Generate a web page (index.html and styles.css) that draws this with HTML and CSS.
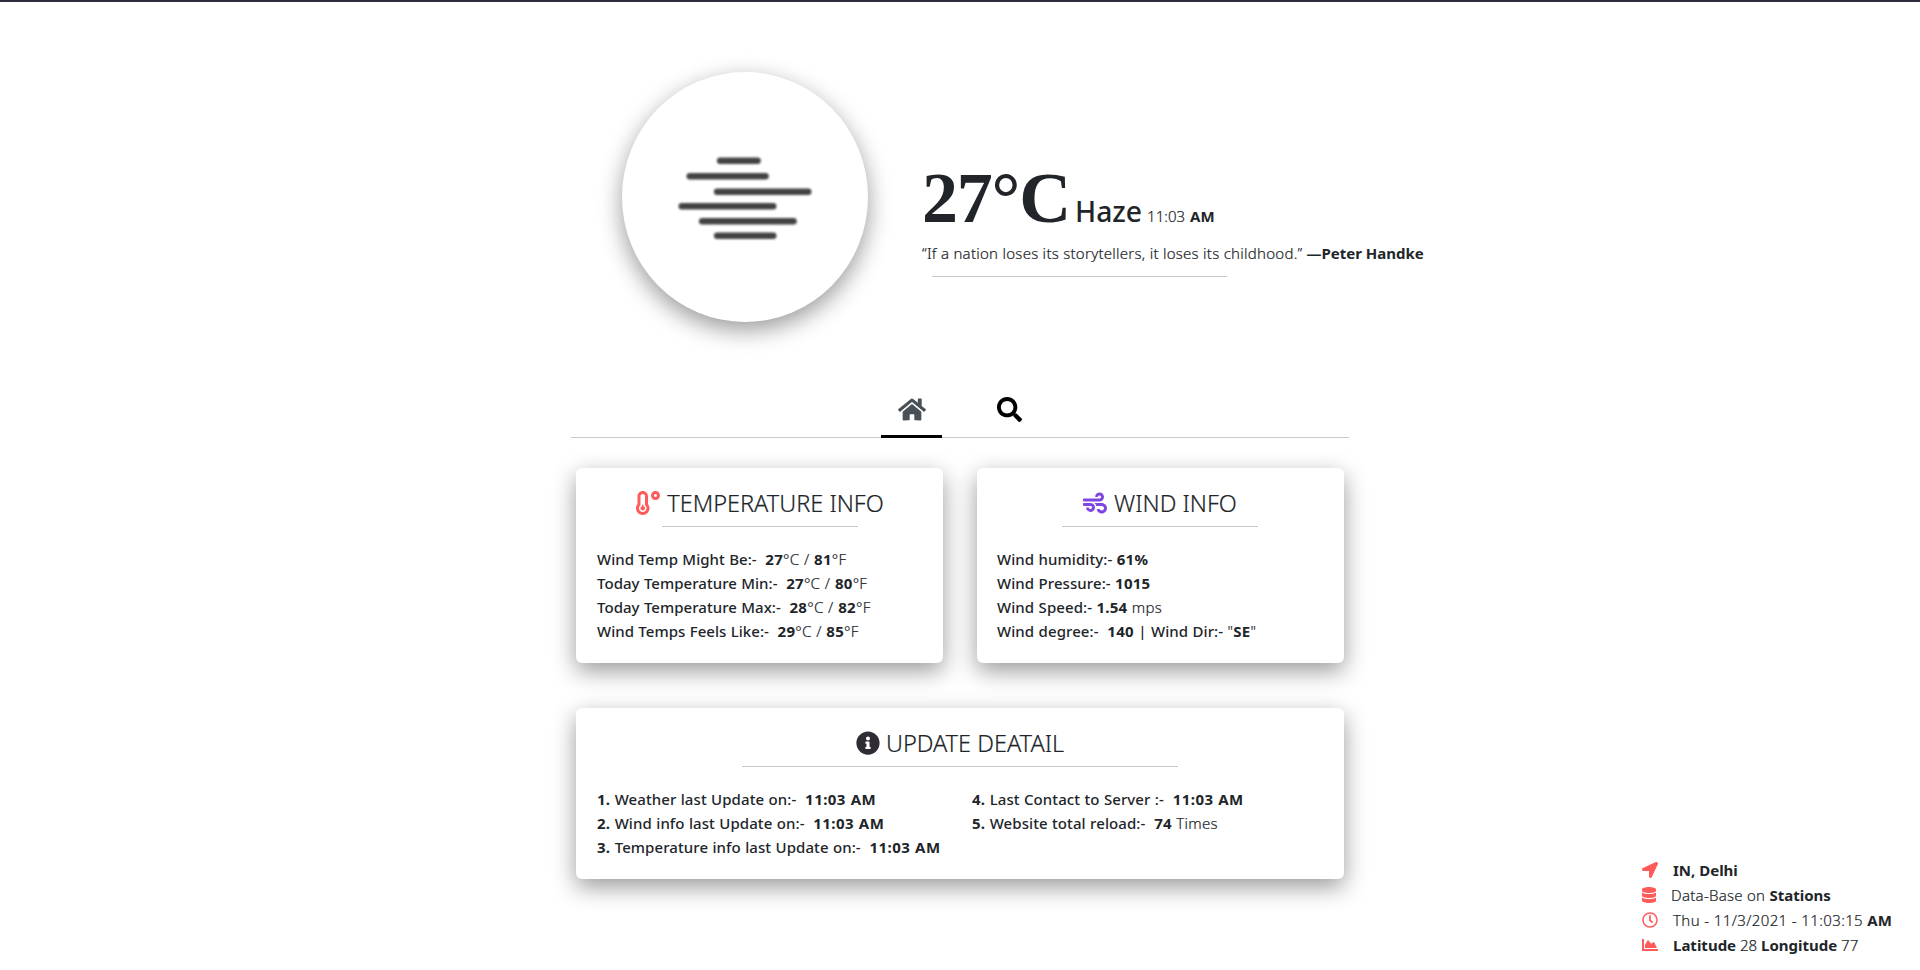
FILE: index.html
```html
<!DOCTYPE html>
<html lang="en">
<head>
<meta charset="utf-8">
<title>Weather</title>
<link rel="stylesheet" href="styles.css">
</head>
<body>
<main class="page">
  <header class="hero">
    <div class="disc">
      <svg class="haze" viewBox="0 0 140 90">
        <g class="haze-bars">
          <path d="M45.200 9.700H82.500M14.800 25.300H90.500M42.200 40.700H133.200M6.800 55.300H98.200M27.200 70.300H118.500M42.200 84.700H98.200"/>
        </g>
      </svg>
    </div>
    <div class="now">
      <div class="now-line"><span class="degrees">27°C</span><span class="state">Haze</span><span class="light clock">11:03</span><b>AM</b></div>
      <div class="quote"><span class="light">“If a nation loses its storytellers, it loses its childhood.”</span> <b>—Peter Handke</b></div>
      <div class="rule rule-quote"></div>
    </div>
  </header>

  <nav class="tabs">
    <a class="tab tab-active"><svg class="icon-home" viewBox="0 0 576 512"><path d="M280.370 148.260L96 300.110V464a16 16 0 0 0 16 16l112.060-.29a16 16 0 0 0 15.920-16V368a16 16 0 0 1 16-16h64a16 16 0 0 1 16 16v95.640a16 16 0 0 0 16 16.050L464 480a16 16 0 0 0 16-16V300L295.670 148.260a12.190 12.190 0 0 0-15.300 0zM571.600 251.470L488 182.560V44.050a12 12 0 0 0-12-12h-56a12 12 0 0 0-12 12v72.610L318.470 43a48 48 0 0 0-61 0L4.340 251.470a12 12 0 0 0-1.600 16.900l25.500 31A12 12 0 0 0 45.150 301l235.220-193.740a12.190 12.190 0 0 1 15.300 0L530.900 301a12 12 0 0 0 16.900-1.600l25.500-31a12 12 0 0 0-1.700-16.930z"/></svg></a>
    <a class="tab"><svg class="icon-search" viewBox="0 0 512 512"><path d="M505 442.700L405.300 343c-4.500-4.500-10.600-7-17-7H372c27.600-35.300 44-79.700 44-128C416 93.100 322.900 0 208 0S0 93.100 0 208s93.100 208 208 208c48.300 0 92.700-16.400 128-44v16.300c0 6.400 2.500 12.500 7 17l99.700 99.700c9.400 9.400 24.600 9.400 33.900 0l28.300-28.300c9.400-9.400 9.400-24.600.1-34zM208 336c-70.700 0-128-57.200-128-128 0-70.700 57.200-128 128-128 70.700 0 128 57.200 128 128 0 70.700-57.200 128-128 128z"/></svg></a>
  </nav>

  <section class="cards">
    <article class="card">
      <h2 class="title"><svg class="icon red" viewBox="0 0 512 512"><path d="M416 0c-52.900 0-96 43.100-96 96s43.100 96 96 96 96-43.100 96-96-43.100-96-96-96zm0 128c-17.700 0-32-14.300-32-32s14.300-32 32-32 32 14.300 32 32-14.300 32-32 32zm-160-16C256 50.100 205.900 0 144 0S32 50.100 32 112v166.500C12.300 303.200 0 334 0 368c0 79.500 64.500 144 144 144s144-64.500 144-144c0-34-12.300-64.900-32-89.500V112zM144 448c-44.100 0-80-35.900-80-80 0-25.500 12.200-48.900 32-63.800V112c0-26.500 21.500-48 48-48s48 21.500 48 48v192.200c19.800 14.800 32 38.300 32 63.800 0 44.100-35.900 80-80 80zm16-125.100V304c0-8.800-7.200-16-16-16s-16 7.200-16 16v18.900c-18.600 6.600-32 24.200-32 45.100 0 26.500 21.500 48 48 48s48-21.500 48-48c0-20.900-13.400-38.500-32-45.100z"/></svg><span>TEMPERATURE INFO</span></h2>
      <div class="rule"></div>
      <ul class="list list-temp">
        <li>Wind Temp Might Be:-&nbsp; <b>27</b><span class="light">°C / </span><b>81</b><span class="light">°F</span></li>
        <li>Today Temperature Min:-&nbsp; <b>27</b><span class="light">°C / </span><b>80</b><span class="light">°F</span></li>
        <li>Today Temperature Max:-&nbsp; <b>28</b><span class="light">°C / </span><b>82</b><span class="light">°F</span></li>
        <li>Wind Temps Feels Like:-&nbsp; <b>29</b><span class="light">°C / </span><b>85</b><span class="light">°F</span></li>
      </ul>
    </article>
    <article class="card card-wind">
      <h2 class="title"><svg class="icon violet" viewBox="0 0 512 512"><path d="M156.700 256H16c-8.800 0-16 7.200-16 16v32c0 8.800 7.200 16 16 16h142.200c15.900 0 30.800 10.900 33.400 26.600 3.300 20-12.100 37.400-31.600 37.400-14.100 0-26.100-9.200-30.400-21.900-2.100-6.300-8.600-10.100-15.200-10.100H81.600c-9.800 0-17.700 8.800-15.900 18.400 8.600 44.100 47.600 77.600 94.200 77.600 57.100 0 102.700-50.100 95.200-108.600C249 291 205.400 256 156.700 256zM16 224h336c59.700 0 106.800-54.800 93.800-116.700-7.600-36.200-36.900-65.500-73.100-73.100-55.400-11.600-105.100 24.900-114.900 75.500-1.900 9.600 6.100 18.300 15.800 18.300h32.800c6.700 0 13.100-3.800 15.200-10.100C325.900 105.200 337.900 96 352 96c19.400 0 34.900 17.400 31.600 37.400-2.600 15.700-17.400 26.600-33.400 26.600H16c-8.800 0-16 7.200-16 16v32c0 8.800 7.200 16 16 16zm384 32H243.700c19.300 16.600 33.200 38.800 39.800 64H400c26.500 0 48 21.500 48 48s-21.500 48-48 48c-17.900 0-33.300-9.900-41.600-24.400-2.900-5-8.700-7.600-14.500-7.600h-33.800c-10.900 0-19 10.800-15.300 21.100 17.800 50.600 70.500 84.800 129.400 72.300 41.200-8.700 75.100-41.600 84.700-82.700C526 321.500 470.500 256 400 256z"/></svg><span>WIND INFO</span></h2>
      <div class="rule"></div>
      <ul class="list">
        <li>Wind humidity:- <b>61%</b></li>
        <li>Wind Pressure:- <b>1015</b></li>
        <li>Wind Speed:- <b>1.54</b> <span class="light">mps</span></li>
        <li>Wind degree:-&nbsp; <b>140</b> | Wind Dir:- <span class="light">"</span><b>SE</b><span class="light">"</span></li>
      </ul>
    </article>
    <article class="card card-wide">
      <h2 class="title title-update"><svg class="icon dark" viewBox="0 0 512 512"><path d="M256 8C119.043 8 8 119.083 8 256c0 136.997 111.043 248 248 248s248-111.003 248-248C504 119.083 392.957 8 256 8zm0 110c23.196 0 42 18.804 42 42s-18.804 42-42 42-42-18.804-42-42 18.804-42 42-42zm56 254c0 6.627-5.373 12-12 12h-88c-6.627 0-12-5.373-12-12v-24c0-6.627 5.373-12 12-12h12v-64h-12c-6.627 0-12-5.373-12-12v-24c0-6.627 5.373-12 12-12h64c6.627 0 12 5.373 12 12v100h12c6.627 0 12 5.373 12 12v24z"/></svg><span>UPDATE DEATAIL</span></h2>
      <div class="rule rule-wide"></div>
      <div class="columns">
        <ul class="list">
          <li><b>1.</b> Weather last Update on:-&nbsp; <b class="time">11:03 AM</b></li>
          <li><b>2.</b> Wind info last Update on:-&nbsp; <b class="time">11:03 AM</b></li>
          <li><b>3.</b> Temperature info last Update on:-&nbsp; <b class="time">11:03 AM</b></li>
        </ul>
        <ul class="list">
          <li><b>4.</b> Last Contact to Server :-&nbsp; <b class="time">11:03 AM</b></li>
          <li><b>5.</b> Website total reload:-&nbsp; <b>74</b> <span class="light">Times</span></li>
        </ul>
      </div>
    </article>
  </section>
</main>

<aside class="status">
  <div class="status-row"><svg class="icon-sm" viewBox="0 0 512 512"><path d="M444.520 3.520L28.740 195.420c-47.970 22.390-31.980 92.750 19.190 92.750h175.910v175.910c0 51.170 70.360 67.170 92.750 19.190l191.900-415.780c15.990-38.390-25.590-79.970-63.970-63.970z"/></svg><b>IN, Delhi</b></div>
  <div class="status-row"><svg class="icon-sm icon-db" viewBox="0 0 448 512"><path d="M448 73.143v45.714C448 159.143 347.667 192 224 192S0 159.143 0 118.857V73.143C0 32.857 100.333 0 224 0s224 32.857 224 73.143zM448 176v102.857C448 319.143 347.667 352 224 352S0 319.143 0 278.857V176c48.125 33.143 136.208 48.572 224 48.572S399.874 209.143 448 176zm0 160v102.857C448 479.143 347.667 512 224 512S0 479.143 0 438.857V336c48.125 33.143 136.208 48.572 224 48.572S399.874 369.143 448 336z"/></svg><span class="light">Data-Base on <b>Stations</b></span></div>
  <div class="status-row"><svg class="icon-sm" viewBox="0 0 512 512"><path d="M256 8C119 8 8 119 8 256s111 248 248 248 248-111 248-248S393 8 256 8zm0 448c-110.500 0-200-89.500-200-200S145.500 56 256 56s200 89.500 200 200-89.500 200-200 200zm61.800-104.400l-84.900-61.700c-3.100-2.300-4.900-5.900-4.900-9.700V116c0-6.600 5.400-12 12-12h32c6.600 0 12 5.400 12 12v141.700l66.800 48.600c5.400 3.900 6.500 11.400 2.600 16.800L334.600 349c-3.900 5.300-11.400 6.500-16.800 2.600z"/></svg><span class="light stamp">Thu - 11/3/2021 - 11:03:15 <b>AM</b></span></div>
  <div class="status-row"><svg class="icon-sm" viewBox="0 0 512 512"><path d="M500 384c6.600 0 12 5.400 12 12v40c0 6.600-5.400 12-12 12H12c-6.600 0-12-5.400-12-12V76c0-6.600 5.400-12 12-12h40c6.600 0 12 5.400 12 12v308h436zM372.700 159.500L288 216l-85.300-113.700c-5.100-6.800-15.500-6.300-19.900 1L96 248v104h384l-89.900-187.800c-3.200-6.500-11.400-8.700-17.400-4.700z"/></svg><span class="light coords"><b>Latitude</b> 28 <b>Longitude</b> 77</span></div>
</aside>
</body>
</html>
```
FILE: styles.css
```css
* { box-sizing: border-box; }

body {
  margin: 0;
  height: 970px;
  overflow: hidden;
  border-top: 2px solid #2f2d3e;
  background: #fff;
  color: #212529;
  font: 500 15px/24px "Noto Sans", "Open Sans", sans-serif;
  white-space: nowrap;
}

svg { display: block; fill: currentColor; flex: none; }
b { font-weight: 700; letter-spacing: 0; -webkit-text-stroke: 0; }
.light { font-weight: 300; letter-spacing: .26px; -webkit-text-stroke: .2px #212529; }
.light b { -webkit-text-stroke-width: 0; }

.page { width: 778px; margin: 0 auto; }

.hero {
  display: flex;
  height: 385px;
  padding: 70px 0 0 51px;
}

.disc {
  flex: none;
  width: 246px;
  height: 250px;
  padding: 79px 0 0 53px;
  border-radius: 50%;
  box-shadow: 0 8px 23px rgba(0, 0, 0, .4);
}

.haze { width: 140px; height: 90px; }
.haze-bars { fill: none; stroke: #434345; stroke-width: 6.6; stroke-linecap: round; filter: blur(.8px); }

.now { padding: 84px 0 0 54px; }
.now-line { display: flex; align-items: baseline; height: 85px; }
.degrees { font: 700 72px/84px "Liberation Serif", serif; letter-spacing: -1.2px; }
.state { margin-left: 5px; font-size: 28.3px; }
.clock { margin: 0 5px; letter-spacing: 0; }
.quote { height: 35px; }

.rule { width: 196px; height: 1px; margin: 0 auto; background: #c8c8c8; }
.rule-quote { width: 295px; margin: 0 0 0 10px; }
.rule-wide { width: 436px; }

.tabs {
  display: flex;
  justify-content: center;
  gap: 37px;
  height: 51px;
  border-bottom: 1px solid #c8c8c8;
}
.tab { width: 61px; height: 51px; padding: 10px 0 0 1px; color: #000; }
.tab svg { margin: 0 auto; }
.tab-active { color: #495057; border-bottom: 3px solid #000; }
.icon-home { width: 28px; height: 25px; }
.icon-search { width: 25px; height: 25px; }

.cards {
  display: grid;
  grid-template-columns: 367px 367px;
  gap: 45px 34px;
  padding: 30px 5px 0;
}
.card {
  height: 195px;
  padding: 19px 20px 0 21px;
  border-radius: 6px;
  background: #fff;
  box-shadow: 0 8px 23px rgba(0, 0, 0, .4);
}
.card-wind { padding: 19px 21px 0 20px; }
.card-wide { grid-column: span 2; height: 171px; padding: 19px 21px 0; }

.title {
  display: flex;
  justify-content: center;
  align-items: center;
  gap: 7px;
  height: 32px;
  margin: 0 0 7px;
  font-size: 23.5px;
  font-weight: 300;
  -webkit-text-stroke: .2px #212529;
}
.title-update { gap: 6px; }
.icon { width: 24px; height: 24px; }
.red { color: #ff5b5b; }
.violet { color: #7e46e2; }
.dark { color: #302c36; }

.list { margin: 0; padding: 0; list-style: none; letter-spacing: .08px; word-spacing: .4px; }
.list-temp { letter-spacing: .04px; }
.list b { letter-spacing: .25px; }
.list .time { letter-spacing: .45px; }
.list .light { letter-spacing: .3px; }
.rule + .list, .columns { margin-top: 20px; }
.columns { display: grid; grid-template-columns: 375px 1fr; }

.status { position: absolute; left: 1642px; top: 857px; }
.status-row { display: flex; align-items: center; gap: 15px; height: 25px; }
.stamp { letter-spacing: .38px; }
.coords { letter-spacing: 0; }
.icon-sm { width: 16px; height: 16px; color: #ff5b5b; }
.icon-db { width: 14px; }
```
